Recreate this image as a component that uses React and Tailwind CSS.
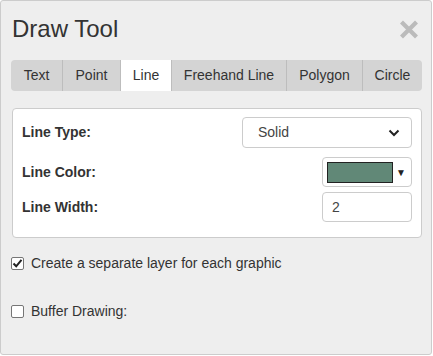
import { useState } from "react";

const tabs = ["Text", "Point", "Line", "Freehand Line", "Polygon", "Circle"];
const tabWidths = ["w-[51px]", "w-[58px]", "w-[51px]", "w-[115px]", "w-[76px]", "flex-1"];

function Check({ checked, onChange, label }) {
  return (
    <label className="flex items-center gap-[7px] text-[14px] h-[16px] cursor-pointer" onClick={onChange}>
      <span className="w-[13px] h-[13px] bg-white border border-[#767676] rounded-[2px] flex items-center justify-center">
        {checked && (
          <svg width="11" height="11" viewBox="0 0 11 11">
            <path d="M1.5 5.5 L4.2 8.3 L9.5 1.8" fill="none" stroke="#222" strokeWidth="2" />
          </svg>
        )}
      </span>
      <span>{label}</span>
    </label>
  );
}

export default function App() {
  const [active, setActive] = useState("Line");
  const [separate, setSeparate] = useState(true);
  const [buffer, setBuffer] = useState(false);

  return (
    <div className="w-[432px] h-[355px] border border-[#cccccc] rounded-[3px] bg-[#eeeeee] text-[#333] font-['Liberation_Sans',Arial,sans-serif] flex flex-col">
      <div className="flex items-center justify-between pl-[11px] pr-[12px] h-[54px] pt-[2px]">
        <h1 className="text-[24px] leading-none text-[#333]">Draw Tool</h1>
        <button className="w-[20px] h-[19px]">
          <svg width="20" height="19" viewBox="0 0 20 19">
            <path d="M2.5 2 L17.5 17 M17.5 2 L2.5 17" stroke="#bbbbbb" strokeWidth="4.2" />
          </svg>
        </button>
      </div>

      <div className="ml-[10px] mt-[5px] w-[411px] h-[31px] flex rounded-[4px] bg-[#d4d4d4] overflow-hidden text-[14px]">
        {tabs.map((t, i) => (
          <button
            key={t}
            onClick={() => setActive(t)}
            className={`${tabWidths[i]} h-full flex items-center justify-center ${
              i > 0 ? "border-l border-[#bdbdbd]" : ""
            } ${active === t ? "bg-white" : ""}`}
          >
            {t}
          </button>
        ))}
      </div>

      <div className="ml-[11px] mt-[17px] w-[410px] h-[130px] bg-white border border-[#cccccc] rounded-[4px] px-[9px] pt-[8px] flex flex-col">
        <div className="flex items-center justify-between h-[31px]">
          <span className="text-[14px] font-bold">Line Type:</span>
          <div className="w-[170px] h-[31px] border border-[#cccccc] rounded-[4px] flex items-center justify-between pl-[15px] pr-[11px] text-[14px] text-[#444]">
            <span>Solid</span>
            <svg width="12" height="8" viewBox="0 0 12 8">
              <path d="M1.5 1.5 L6 6 L10.5 1.5" fill="none" stroke="#222" strokeWidth="2" />
            </svg>
          </div>
        </div>
        <div className="flex items-center justify-between h-[30px] mt-[9px]">
          <span className="text-[14px] font-bold">Line Color:</span>
          <div className="w-[90px] h-[30px] border border-[#cccccc] rounded-[4px] flex items-center pl-[4px] pr-[5px] justify-between">
            <div className="w-[66px] h-[21px] bg-[#618877] border border-[#222]" />
            <span className="text-[10px] text-[#222]">▼</span>
          </div>
        </div>
        <div className="flex items-center justify-between h-[30px] mt-[5px]">
          <span className="text-[14px] font-bold">Line Width:</span>
          <input
            defaultValue="2"
            className="w-[90px] h-[30px] border border-[#cccccc] rounded-[4px] px-[9px] text-[14px] text-[#444] outline-none"
          />
        </div>
      </div>

      <div className="ml-[10px] mt-[17px]">
        <Check checked={separate} onChange={() => setSeparate(!separate)} label="Create a separate layer for each graphic" />
      </div>
      <div className="ml-[10px] mt-[32px]">
        <Check checked={buffer} onChange={() => setBuffer(!buffer)} label="Buffer Drawing:" />
      </div>
    </div>
  );
}
